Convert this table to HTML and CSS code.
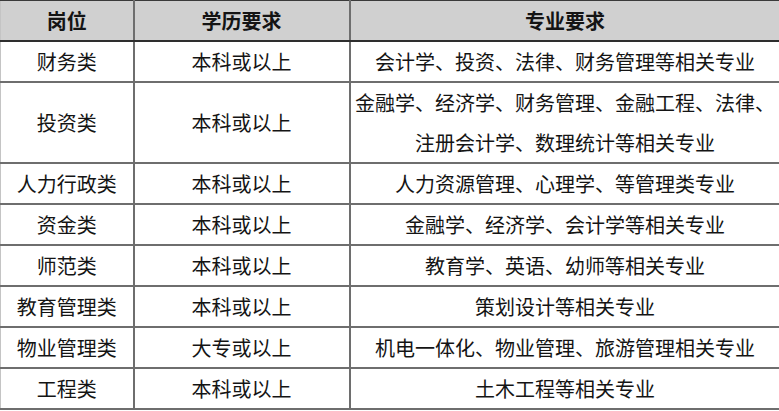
FILE: index.html
```html
<!DOCTYPE html>
<html lang="zh-CN">
<head>
<meta charset="utf-8">
<title>岗位要求</title>
<link rel="stylesheet" href="styles.css">
</head>
<body>
<table class="req">
  <colgroup>
    <col class="c-post">
    <col class="c-edu">
    <col class="c-major">
  </colgroup>
  <thead>
    <tr><th>岗位</th><th>学历要求</th><th>专业要求</th></tr>
  </thead>
  <tbody>
    <tr><td>财务类</td><td>本科或以上</td><td>会计学、投资、法律、财务管理等相关专业</td></tr>
    <tr class="two"><td>投资类</td><td>本科或以上</td><td>金融学、经济学、财务管理、金融工程、法律、<br>注册会计学、数理统计等相关专业</td></tr>
    <tr><td>人力行政类</td><td>本科或以上</td><td>人力资源管理、心理学、等管理类专业</td></tr>
    <tr><td>资金类</td><td>本科或以上</td><td>金融学、经济学、会计学等相关专业</td></tr>
    <tr><td>师范类</td><td>本科或以上</td><td>教育学、英语、幼师等相关专业</td></tr>
    <tr><td>教育管理类</td><td>本科或以上</td><td>策划设计等相关专业</td></tr>
    <tr><td>物业管理类</td><td>大专或以上</td><td>机电一体化、物业管理、旅游管理相关专业</td></tr>
    <tr><td>工程类</td><td>本科或以上</td><td>土木工程等相关专业</td></tr>
  </tbody>
</table>
</body>
</html>
```

FILE: styles.css
```css
html, body {
  margin: 0;
  padding: 0;
  background: #ffffff;
}

body {
  font-family: "Noto Sans CJK SC", "Noto Sans", sans-serif;
  color: #141414;
}

.req {
  width: 779px;
  border-collapse: collapse;
  table-layout: fixed;
}

.c-post { width: 133px; }
.c-edu { width: 216px; }
.c-major { width: 430px; }

.req th,
.req td {
  padding: 0;
  border: 2px solid #6e6e6e;
  text-align: center;
  vertical-align: middle;
  font-size: 20px;
  line-height: 39px;
  white-space: nowrap;
}

.req th {
  background: #d0d0d0;
  font-weight: 700;
  border-top: 1px solid #3a3a3a;
  border-bottom: 2px solid #2e2e2e;
}

.req tr > :first-child {
  border-left: 1px solid #c4c4c4;
}

.req tr > :last-child {
  border-right: none;
}

.req tr.two td {
  line-height: 39.5px;
}
```
